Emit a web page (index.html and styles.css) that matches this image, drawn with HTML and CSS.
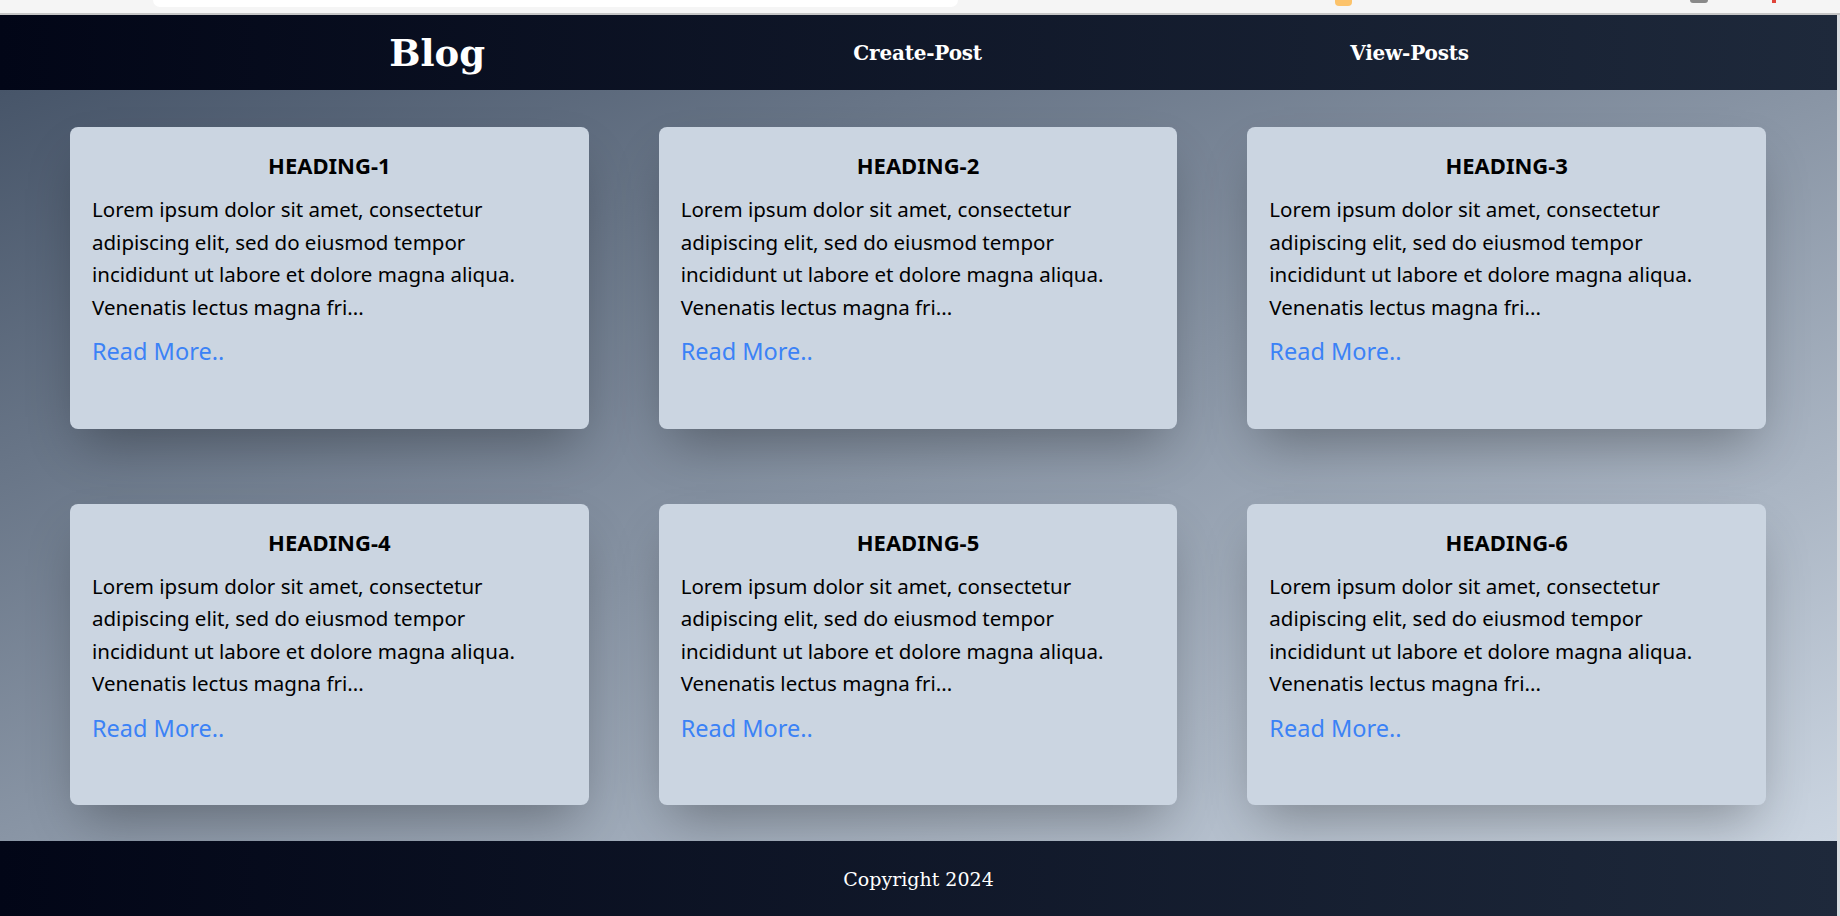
FILE: index.html
```html
<!DOCTYPE html>
<html lang="en">
<head>
<meta charset="utf-8">
<title>Blog</title>
<link rel="stylesheet" href="styles.css">
</head>
<body>
<div class="page">
  <div class="chrome">
    <span class="pill"></span>
    <span class="tab-orange"></span>
    <span class="tab-grey"></span>
    <span class="tab-red"></span>
  </div>
  <div class="frame">
    <header class="topbar">
      <a class="brand" href="#">Blog</a>
      <a class="nav-link" href="#">Create-Post</a>
      <a class="nav-link" href="#">View-Posts</a>
    </header>
    <main class="posts">
      <article class="card">
        <h2 class="card-title">HEADING-1</h2>
        <p class="card-text">Lorem ipsum dolor sit amet, consectetur adipiscing elit, sed do eiusmod tempor incididunt ut labore et dolore magna aliqua. Venenatis lectus magna fri...</p>
        <a class="read-more" href="#">Read More..</a>
      </article>
      <article class="card">
        <h2 class="card-title">HEADING-2</h2>
        <p class="card-text">Lorem ipsum dolor sit amet, consectetur adipiscing elit, sed do eiusmod tempor incididunt ut labore et dolore magna aliqua. Venenatis lectus magna fri...</p>
        <a class="read-more" href="#">Read More..</a>
      </article>
      <article class="card">
        <h2 class="card-title">HEADING-3</h2>
        <p class="card-text">Lorem ipsum dolor sit amet, consectetur adipiscing elit, sed do eiusmod tempor incididunt ut labore et dolore magna aliqua. Venenatis lectus magna fri...</p>
        <a class="read-more" href="#">Read More..</a>
      </article>
      <article class="card">
        <h2 class="card-title">HEADING-4</h2>
        <p class="card-text">Lorem ipsum dolor sit amet, consectetur adipiscing elit, sed do eiusmod tempor incididunt ut labore et dolore magna aliqua. Venenatis lectus magna fri...</p>
        <a class="read-more" href="#">Read More..</a>
      </article>
      <article class="card">
        <h2 class="card-title">HEADING-5</h2>
        <p class="card-text">Lorem ipsum dolor sit amet, consectetur adipiscing elit, sed do eiusmod tempor incididunt ut labore et dolore magna aliqua. Venenatis lectus magna fri...</p>
        <a class="read-more" href="#">Read More..</a>
      </article>
      <article class="card">
        <h2 class="card-title">HEADING-6</h2>
        <p class="card-text">Lorem ipsum dolor sit amet, consectetur adipiscing elit, sed do eiusmod tempor incididunt ut labore et dolore magna aliqua. Venenatis lectus magna fri...</p>
        <a class="read-more" href="#">Read More..</a>
      </article>
    </main>
    <footer class="footer">Copyright 2024</footer>
  </div>
</div>
</body>
</html>
```
FILE: styles.css
```css
* { box-sizing: border-box; }
html, body { margin: 0; padding: 0; }
body {
  width: 1840px;
  height: 916px;
  overflow: hidden;
  background: #f5f5f5;
  font-family: "Noto Sans", "Open Sans", sans-serif;
}
.page {
  display: flex;
  flex-direction: column;
  height: 916px;
}
.chrome {
  height: 15px;
  flex: none;
  display: flex;
  align-items: flex-start;
  background: #f5f5f5;
  border-bottom: 2px solid #c6c6c6;
}
.pill {
  margin-left: 153px;
  width: 805px;
  height: 7px;
  background: #ffffff;
  border-radius: 0 0 14px 14px;
}
.tab-orange {
  margin-left: 377px;
  width: 17px;
  height: 6px;
  background: #fcc36b;
  border-radius: 0 0 4px 4px;
}
.tab-grey {
  margin-left: 338px;
  width: 18px;
  height: 3px;
  background: #8a8a8a;
  border-radius: 0 0 9px 9px;
}
.tab-red {
  margin-left: 64px;
  width: 4px;
  height: 3px;
  background: #e0453a;
}
.frame {
  flex: 1;
  display: flex;
  flex-direction: column;
  border-right: 3px solid #d9dce0;
  min-height: 0;
}
.topbar {
  height: 75px;
  flex: none;
  display: flex;
  align-items: center;
  justify-content: space-around;
  padding: 0 184px 0 205px;
  background: linear-gradient(to right, #020617, #1e293b);
  font-family: "DejaVu Serif", "Liberation Serif", serif;
}
.brand {
  color: #ffffff;
  text-decoration: none;
  font-size: 37px;
  font-weight: 700;
}
.nav-link {
  color: #ffffff;
  text-decoration: none;
  font-size: 20px;
  font-weight: 700;
  letter-spacing: -0.2px;
}
.posts {
  flex: 1;
  display: grid;
  grid-template-columns: repeat(3, 1fr);
  grid-template-rows: 1fr 1fr;
  column-gap: 70px;
  row-gap: 75px;
  padding: 37px 71px 36px 70px;
  background: linear-gradient(to bottom right, #475569, #cbd5e1);
  min-height: 0;
}
.card {
  background: #cbd5e1;
  border-radius: 8px;
  padding: 22px 22px;
  box-shadow: 0 25px 50px -12px rgba(0, 0, 0, 0.3);
  display: flex;
  flex-direction: column;
  align-items: flex-start;
}
.card-title {
  align-self: stretch;
  margin: 0;
  text-align: center;
  font-size: 22px;
  line-height: 32px;
  font-weight: 700;
  color: #000000;
}
.card-text {
  margin: 12px 0 0;
  font-size: 20.5px;
  line-height: 32.5px;
  color: #000000;
}
.read-more {
  margin-top: 12px;
  color: #3b82f6;
  text-decoration: none;
  font-size: 23.5px;
  line-height: 32px;
}
.footer {
  height: 75px;
  flex: none;
  display: flex;
  align-items: center;
  justify-content: center;
  background: linear-gradient(to right, #020617, #1e293b);
  color: #ffffff;
  font-family: "DejaVu Serif", "Liberation Serif", serif;
  font-size: 19px;
}
```
